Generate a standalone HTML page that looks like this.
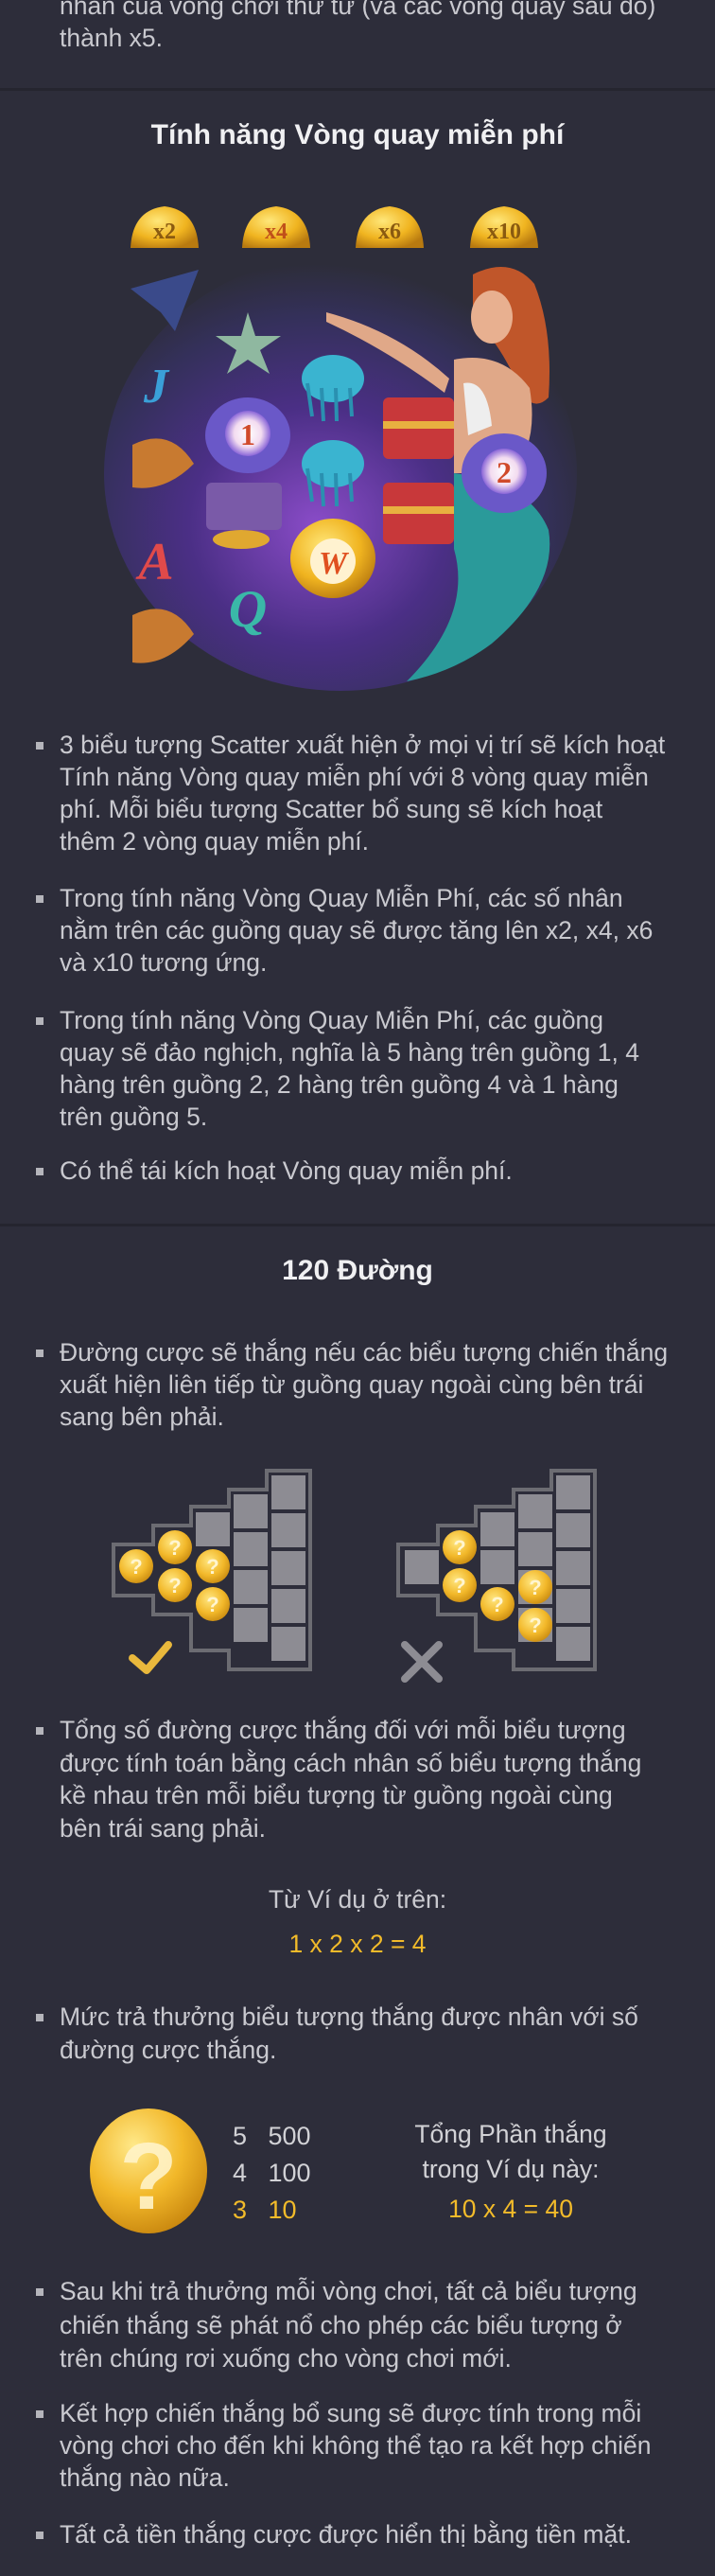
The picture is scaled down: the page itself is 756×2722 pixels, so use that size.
<!DOCTYPE html>
<html><head><meta charset="utf-8">
<style>
*{margin:0;padding:0;box-sizing:border-box}
html,body{width:756px;height:2722px;background:#2d2d3a;overflow:hidden}
body{position:relative;font-family:"Liberation Sans",sans-serif;color:#c9c9cf;font-size:26.5px}
.p{position:absolute;left:63px;line-height:34px;white-space:nowrap}
.p.b::before{content:"";position:absolute;left:-25px;top:14px;width:8px;height:8px;background:#b5b5bb}
.div{position:absolute;left:0;width:756px;height:3px;background:#25252f}
.t{position:absolute;left:0;width:756px;text-align:center;color:#f0f0f2;font-weight:bold;font-size:30px;line-height:34px}
.c{position:absolute;text-align:center;line-height:34px;white-space:nowrap}
.g{color:#f2bb2a}
</style></head><body>

<div class="p" style="top:-11px">nhân của vòng chơi thứ tư (và các vòng quay sau đó)<br>thành x5.</div>
<div class="div" style="top:93px"></div>
<div class="t" style="top:126px">Tính năng Vòng quay miễn phí</div>

<svg style="position:absolute;left:0;top:200px" width="756" height="530" viewBox="0 200 756 530">
<defs>
<radialGradient id="bg" cx="0.45" cy="0.62" r="0.6">
<stop offset="0" stop-color="#8a4cc8"/><stop offset="0.45" stop-color="#4b2f86"/><stop offset="0.8" stop-color="#34305a"/><stop offset="1" stop-color="#2d2d3a"/></radialGradient>
<radialGradient id="gold" cx="0.4" cy="0.35" r="0.7"><stop offset="0" stop-color="#ffe77a"/><stop offset="0.6" stop-color="#f0b420"/><stop offset="1" stop-color="#b87a10"/></radialGradient>
<radialGradient id="pearl" cx="0.5" cy="0.5" r="0.5"><stop offset="0" stop-color="#fff"/><stop offset="0.6" stop-color="#f3dcf0"/><stop offset="1" stop-color="#8a66d8"/></radialGradient>
</defs>
<ellipse cx="360" cy="500" rx="250" ry="230" fill="url(#bg)"/>
<g font-family="Liberation Serif" font-weight="bold" font-size="24" fill="#8a5a10" text-anchor="middle">
<path d="M138 262 Q140 222 174 218 Q208 222 210 262 Z" fill="url(#gold)"/><text x="174" y="252">x2</text>
<path d="M256 262 Q258 222 292 218 Q326 222 328 262 Z" fill="url(#gold)"/><text x="292" y="252" fill="#c0501a">x4</text>
<path d="M376 262 Q378 222 412 218 Q446 222 448 262 Z" fill="url(#gold)"/><text x="412" y="252">x6</text>
<path d="M497 262 Q499 222 533 218 Q567 222 569 262 Z" fill="url(#gold)"/><text x="533" y="252">x10</text>
</g>
<path d="M138 305 L210 285 L185 350 L170 330 Z" fill="#3a4a8a"/>
<text x="165" y="425" font-family="Liberation Serif" font-style="italic" font-weight="bold" font-size="52" fill="#3aa0d8" text-anchor="middle">J</text>
<path d="M262 330 L270 355 L297 355 L275 370 L285 395 L262 380 L240 395 L250 370 L228 355 L255 355 Z" fill="#8fb8a0"/>
<ellipse cx="352" cy="400" rx="33" ry="25" fill="#3ab4d0"/><path d="M325 405 L330 440 M340 410 L342 445 M355 410 L356 445 M370 410 L372 440" stroke="#2a90b0" stroke-width="4"/>
<ellipse cx="352" cy="490" rx="33" ry="25" fill="#3ab4d0"/><path d="M325 495 L330 530 M340 500 L342 535 M355 500 L356 535 M370 500 L372 530" stroke="#2a90b0" stroke-width="4"/>
<ellipse cx="262" cy="460" rx="45" ry="40" fill="#6a58c8"/><circle cx="262" cy="458" r="24" fill="url(#pearl)"/><text x="262" y="470" font-family="Liberation Serif" font-weight="bold" font-size="32" fill="#d04a2a" text-anchor="middle">1</text>
<path d="M140 470 Q180 450 205 490 Q175 520 140 515 Z" fill="#c87a30"/><path d="M140 650 Q180 630 205 670 Q175 705 140 700 Z" fill="#c87a30"/>
<rect x="218" y="510" width="80" height="50" rx="6" fill="#7a5aa8"/><ellipse cx="255" cy="570" rx="30" ry="10" fill="#e0a830"/>
<text x="165" y="612" font-family="Liberation Serif" font-style="italic" font-weight="bold" font-size="56" fill="#e04a4a" text-anchor="middle">A</text>
<text x="262" y="662" font-family="Liberation Serif" font-style="italic" font-weight="bold" font-size="56" fill="#3ab8a8" text-anchor="middle">Q</text>
<ellipse cx="352" cy="590" rx="45" ry="42" fill="url(#gold)"/><circle cx="352" cy="593" r="24" fill="#fff2d0"/><text x="352" y="606" font-family="Liberation Serif" font-style="italic" font-weight="bold" font-size="34" fill="#e05020" text-anchor="middle">W</text>
<rect x="405" y="420" width="75" height="65" rx="6" fill="#c8383a"/><rect x="405" y="445" width="75" height="8" fill="#e8b040"/>
<rect x="405" y="510" width="75" height="65" rx="6" fill="#c8383a"/><rect x="405" y="535" width="75" height="8" fill="#e8b040"/>
<path d="M500 290 Q540 270 565 300 Q585 350 580 420 Q560 440 545 400 Q520 350 500 340 Z" fill="#c0562a"/>
<ellipse cx="520" cy="335" rx="22" ry="28" fill="#e8b090"/>
<path d="M345 330 Q420 350 475 400 L470 415 Q410 370 345 340 Z" fill="#e0a888"/>
<path d="M480 380 Q530 370 560 410 Q570 470 540 500 L480 500 Z" fill="#e0a888"/>
<path d="M490 405 Q515 400 520 450 L495 460 Z" fill="#eee"/>
<path d="M480 500 Q560 510 580 560 Q590 620 520 680 Q480 710 430 720 Q500 650 480 580 Z" fill="#2a9a9a"/>
<ellipse cx="533" cy="500" rx="45" ry="42" fill="#6a58c8"/><circle cx="533" cy="498" r="24" fill="url(#pearl)"/><text x="533" y="510" font-family="Liberation Serif" font-weight="bold" font-size="32" fill="#d04a2a" text-anchor="middle">2</text>
</svg>

<div class="p b" style="top:770px">3 biểu tượng Scatter xuất hiện ở mọi vị trí sẽ kích hoạt<br>Tính năng Vòng quay miễn phí với 8 vòng quay miễn<br>phí. Mỗi biểu tượng Scatter bổ sung sẽ kích hoạt<br>thêm 2 vòng quay miễn phí.</div>
<div class="p b" style="top:932px">Trong tính năng Vòng Quay Miễn Phí, các số nhân<br>nằm trên các guồng quay sẽ được tăng lên x2, x4, x6<br>và x10 tương ứng.</div>
<div class="p b" style="top:1061px">Trong tính năng Vòng Quay Miễn Phí, các guồng<br>quay sẽ đảo nghịch, nghĩa là 5 hàng trên guồng 1, 4<br>hàng trên guồng 2, 2 hàng trên guồng 4 và 1 hàng<br>trên guồng 5.</div>
<div class="p b" style="top:1220px">Có thể tái kích hoạt Vòng quay miễn phí.</div>
<div class="div" style="top:1293px"></div>
<div class="t" style="top:1326px">120 Đường</div>
<div class="p b" style="top:1412px">Đường cược sẽ thắng nếu các biểu tượng chiến thắng<br>xuất hiện liên tiếp từ guồng quay ngoài cùng bên trái<br>sang bên phải.</div>

<svg style="position:absolute;left:0;top:1540px" width="756" height="250" viewBox="0 1540 756 250">
<defs>
<radialGradient id="cg" cx="0.4" cy="0.35" r="0.7"><stop offset="0" stop-color="#ffe680"/><stop offset="0.6" stop-color="#f2b82a"/><stop offset="1" stop-color="#c88a10"/></radialGradient>
<g id="stair">
<path d="M282 1554 L328 1554 L328 1764 L242 1764 L242 1744 L202 1744 L202 1706 L162 1706 L162 1686 L120 1686 L120 1632 L162 1632 L162 1612 L202 1612 L202 1592 L242 1592 L242 1574 L282 1574 Z" fill="none" stroke="#6c6c72" stroke-width="4"/>
<g fill="#8d8c93">
<rect x="287" y="1559" width="36" height="36"/><rect x="287" y="1599" width="36" height="36"/><rect x="287" y="1639" width="36" height="36"/><rect x="287" y="1679" width="36" height="36"/><rect x="287" y="1719" width="36" height="36"/>
<rect x="247" y="1579" width="36" height="36"/><rect x="247" y="1619" width="36" height="36"/><rect x="247" y="1659" width="36" height="36"/><rect x="247" y="1699" width="36" height="36"/>
</g>
</g>
<g id="coin"><circle r="18" fill="url(#cg)"/><text y="8" font-family="Liberation Sans" font-weight="bold" font-size="22" fill="#fff5d0" text-anchor="middle">?</text></g>
</defs>
<use href="#stair"/>
<rect x="207" y="1598" width="36" height="36" fill="#8d8c93"/>
<use href="#coin" x="144" y="1655"/><use href="#coin" x="185" y="1635"/><use href="#coin" x="185" y="1675"/><use href="#coin" x="225" y="1655"/><use href="#coin" x="225" y="1695"/>
<path d="M140 1752 L155 1765 L178 1738" fill="none" stroke="#e9b83c" stroke-width="8" stroke-linecap="round" stroke-linejoin="round"/>
<use href="#stair" x="301"/>
<g fill="#8d8c93"><rect x="428" y="1638" width="36" height="36"/><rect x="508" y="1598" width="36" height="36"/><rect x="508" y="1638" width="36" height="36"/></g>
<use href="#coin" x="486" y="1635"/><use href="#coin" x="486" y="1675"/><use href="#coin" x="526" y="1695"/><use href="#coin" x="566" y="1677"/><use href="#coin" x="566" y="1717"/>
<path d="M428 1738 L464 1774 M464 1738 L428 1774" stroke="#8d8c93" stroke-width="8" stroke-linecap="round"/>
</svg>

<div class="p b" style="top:1811px;line-height:34.5px">Tổng số đường cược thắng đối với mỗi biểu tượng<br>được tính toán bằng cách nhân số biểu tượng thắng<br>kề nhau trên mỗi biểu tượng từ guồng ngoài cùng<br>bên trái sang phải.</div>
<div class="c" style="left:0;width:756px;top:1990px">Từ Ví dụ ở trên:</div>
<div class="c g" style="left:0;width:756px;top:2037px">1 x 2 x 2 = 4</div>
<div class="p b" style="top:2114px;line-height:35px">Mức trả thưởng biểu tượng thắng được nhân với số<br>đường cược thắng.</div>

<svg style="position:absolute;left:90px;top:2222px" width="136" height="146">
<defs><radialGradient id="bc" cx="0.38" cy="0.3" r="0.75"><stop offset="0" stop-color="#ffe98a"/><stop offset="0.55" stop-color="#f2b82a"/><stop offset="1" stop-color="#c8860e"/></radialGradient></defs>
<ellipse cx="67" cy="72" rx="62" ry="66" fill="url(#bc)"/>
<text x="67" y="112" font-family="Liberation Sans" font-weight="bold" font-size="100" fill="#fff3c8" fill-opacity="0.9" text-anchor="middle">?</text>
</svg>
<div class="c" style="left:246px;top:2238px;font-size:27px;line-height:39px;text-align:left;color:#d2d2d6">5&nbsp;&nbsp;&nbsp;500<br>4&nbsp;&nbsp;&nbsp;100<br><span class="g">3&nbsp;&nbsp;&nbsp;10</span></div>
<div class="c" style="left:400px;width:280px;top:2237px;line-height:37px;color:#d2d2d6">Tổng Phần thắng<br>trong Ví dụ này:</div>
<div class="c g" style="left:400px;width:280px;top:2317px">10 x 4 = 40</div>

<div class="p b" style="top:2404px;line-height:35.5px">Sau khi trả thưởng mỗi vòng chơi, tất cả biểu tượng<br>chiến thắng sẽ phát nổ cho phép các biểu tượng ở<br>trên chúng rơi xuống cho vòng chơi mới.</div>
<div class="p b" style="top:2533px;line-height:34px">Kết hợp chiến thắng bổ sung sẽ được tính trong mỗi<br>vòng chơi cho đến khi không thể tạo ra kết hợp chiến<br>thắng nào nữa.</div>
<div class="p b" style="top:2661px">Tất cả tiền thắng cược được hiển thị bằng tiền mặt.</div>
</body></html>
